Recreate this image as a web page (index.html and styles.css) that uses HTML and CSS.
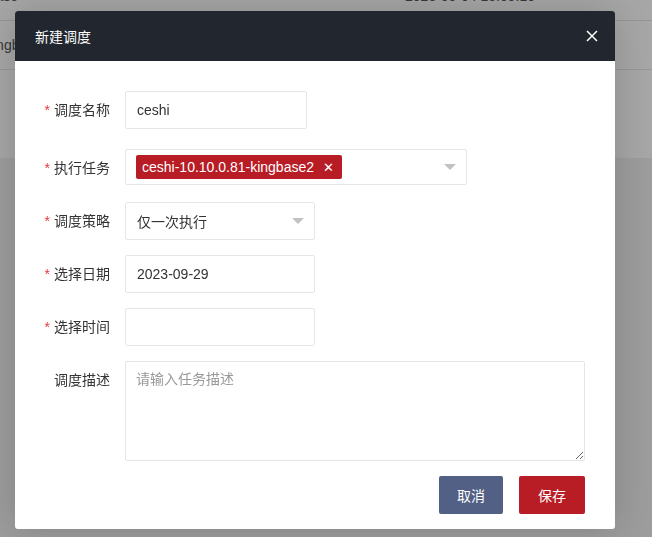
FILE: index.html
```html
<!DOCTYPE html>
<html lang="zh-CN">
<head>
<meta charset="utf-8">
<title>新建调度</title>
<link rel="stylesheet" href="styles.css">
</head>
<body>
<div class="page">
  <div class="trow trow-first">
    <span class="cell cell-a">kingbase</span>
    <span class="cell cell-b">2023-09-04 10:09:10</span>
  </div>
  <div class="trow">
    <span class="cell cell-a2">kingbase</span>
  </div>
  <div class="trow trow-last"></div>
</div>

<div class="overlay">
  <div class="dialog">
    <div class="dlg-head">
      <span class="dlg-title">新建调度</span>
      <svg class="dlg-close" width="12" height="12" viewBox="0 0 12 12"><path d="M1 1L11 11M11 1L1 11" stroke="#ffffff" stroke-width="1.5" fill="none"/></svg>
    </div>
    <div class="dlg-body">
      <div class="item">
        <label class="lbl"><i class="req">*</i>调度名称</label>
        <div class="ctrl"><div class="input w-name">ceshi</div></div>
      </div>
      <div class="item item-multi">
        <label class="lbl"><i class="req">*</i>执行任务</label>
        <div class="ctrl">
          <div class="input multi">
            <span class="tag">ceshi-10.10.0.81-kingbase2<span class="tag-x">✕</span></span>
            <span class="arrow"></span>
          </div>
        </div>
      </div>
      <div class="item">
        <label class="lbl"><i class="req">*</i>调度策略</label>
        <div class="ctrl"><div class="input w-sel select">仅一次执行<span class="arrow"></span></div></div>
      </div>
      <div class="item">
        <label class="lbl"><i class="req">*</i>选择日期</label>
        <div class="ctrl"><div class="input w-sel">2023-09-29</div></div>
      </div>
      <div class="item">
        <label class="lbl"><i class="req">*</i>选择时间</label>
        <div class="ctrl"><div class="input w-sel"></div></div>
      </div>
      <div class="item">
        <label class="lbl">调度描述</label>
        <div class="ctrl"><textarea class="area" placeholder="请输入任务描述"></textarea></div>
      </div>
      <div class="actions">
        <button class="btn btn-cancel">取消</button>
        <button class="btn btn-save">保存</button>
      </div>
    </div>
  </div>
</div>
</body>
</html>
```

FILE: styles.css
```css
* { box-sizing: border-box; }
html, body { margin: 0; padding: 0; }
body {
  width: 652px;
  height: 537px;
  overflow: hidden;
  background: #f0f0f0;
  font-family: "Liberation Sans", "Noto Sans CJK SC", sans-serif;
  font-size: 14px;
  color: #333;
}
.page {
  background: #ffffff;
  margin-top: -28px;
}
.trow {
  height: 49px;
  border-bottom: 1px solid #e6e6e6;
  display: flex;
  align-items: center;
  position: relative;
  white-space: nowrap;
  overflow: hidden;
}
.trow-last { height: 88px; border-bottom: none; }
.cell { color: #555; font-size: 14px; }
.cell-a { margin-left: -38px; }
.cell-a2 { margin-left: -14px; }
.cell-b { margin-left: 387px; }

.overlay {
  position: fixed;
  inset: 0;
  background: rgba(0, 0, 0, 0.35);
  padding: 11px 0 0 15px;
}
.dialog {
  width: 600px;
  background: #fff;
  border-radius: 3px;
  overflow: hidden;
  box-shadow: 0 0 40px rgba(0, 0, 0, 0.18);
}
.dlg-head {
  height: 50px;
  background: #22262f;
  display: flex;
  align-items: center;
  justify-content: space-between;
  padding: 0 17px 0 20px;
}
.dlg-title {
  color: #fff;
  font-size: 14px;
  font-family: "Noto Sans CJK SC", sans-serif;
}
.dlg-close { display: block; }
.dlg-body {
  padding: 30px 30px 15px 0;
}
.item {
  display: flex;
  align-items: flex-start;
  margin-bottom: 15px;
}
.item-multi { margin-top: 20px; margin-bottom: 17px; }
.lbl {
  width: 110px;
  height: 38px;
  overflow: hidden;
  flex: none;
  padding-right: 15px;
  text-align: right;
  line-height: 37px;
  font-family: "Noto Sans CJK SC", sans-serif;
  color: #333;
}
.item-multi .lbl { line-height: 36px; height: 36px; }
.req {
  font-style: normal;
  color: #e4393c;
  margin-right: 4px;
  font-family: "Liberation Sans", sans-serif;
  line-height: 1;
}
.ctrl { flex: 1; }
.input {
  height: 38px;
  border: 1px solid #e6e6e6;
  border-radius: 2px;
  padding: 0 11px;
  display: flex;
  align-items: center;
  color: #333;
  position: relative;
}
.w-name { width: 182px; }
.w-sel { width: 190px; }
.multi {
  width: 342px;
  height: 36px;
  padding: 0 10px;
}
.tag {
  height: 24px;
  background: #b81c25;
  color: #fff;
  border-radius: 2px;
  display: inline-flex;
  align-items: center;
  padding: 0 8px 0 6px;
  font-size: 14px;
}
.tag-x {
  margin-left: 9px;
  font-size: 13px;
  font-weight: bold;
  font-family: "DejaVu Sans", sans-serif;
}
.arrow {
  position: absolute;
  right: 10px;
  top: 50%;
  margin-top: -3px;
  width: 0;
  height: 0;
  border-left: 6px solid transparent;
  border-right: 6px solid transparent;
  border-top: 6px solid #c2c2c2;
}
.select { font-family: "Noto Sans CJK SC", sans-serif; }
.area {
  display: block;
  width: 460px;
  height: 100px;
  border: 1px solid #e6e6e6;
  border-radius: 2px;
  padding: 6px 10px;
  font-family: "Noto Sans CJK SC", sans-serif;
  font-size: 14px;
  color: #333;
  resize: vertical;
  outline: none;
  margin: 0;
}
.area::placeholder { color: #999; }
.actions {
  display: flex;
  justify-content: flex-end;
  gap: 16px;
  padding-top: 0;
}
.btn {
  height: 38px;
  border: none;
  border-radius: 2px;
  color: #fff;
  font-size: 14px;
  font-family: "Noto Sans CJK SC", sans-serif;
  padding: 0;
  cursor: pointer;
}
.btn-cancel { width: 64px; background: #516084; }
.btn-save { width: 66px; background: #b81c25; }
```
